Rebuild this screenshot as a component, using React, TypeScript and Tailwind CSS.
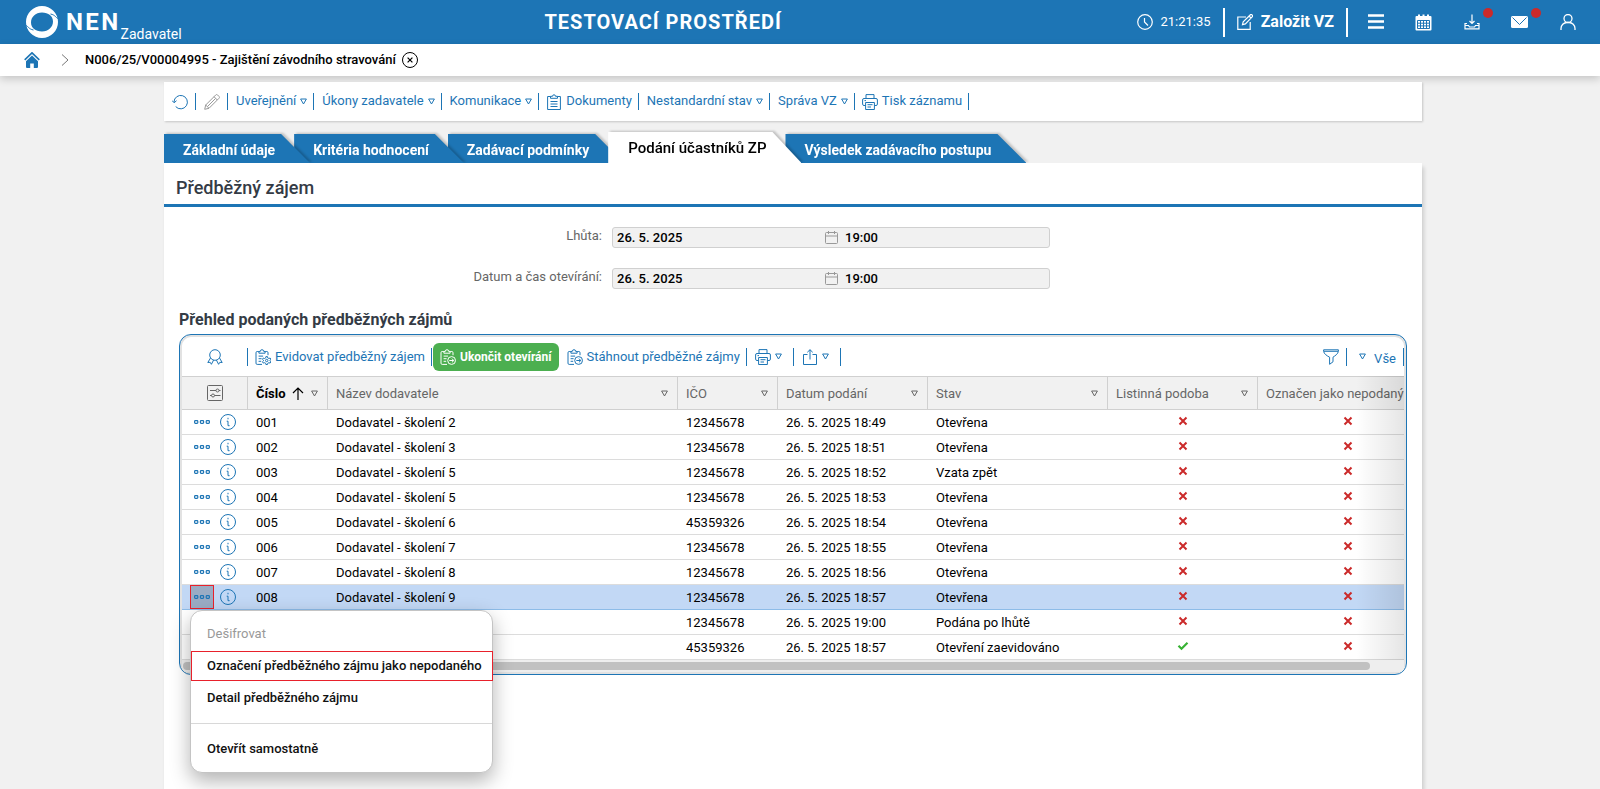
import type { ReactNode } from 'react';
import { clsx } from 'clsx';

const TABS = [
  { label: 'Základní údaje', z: 'z-[4]' },
  { label: 'Kritéria hodnocení', z: 'z-[3]' },
  { label: 'Zadávací podmínky', z: 'z-[2]' },
  { label: 'Podání účastníků ZP', z: 'z-[5]', active: true },
  { label: 'Výsledek zadávacího postupu', z: 'z-[1]' }
];

const FIELDS = [
  { id: 'lhuta', label: 'Lhůta:', date: '26. 5. 2025', time: '19:00' },
  { id: 'otevirani', label: 'Datum a čas otevírání:', date: '26. 5. 2025', time: '19:00' }
];

const COLUMNS = [
  { label: 'Název dodavatele', width: 'w-[350px]' },
  { label: 'IČO', width: 'w-[100px]' },
  { label: 'Datum podání', width: 'w-[150px]' },
  { label: 'Stav', width: 'w-[180px]' },
  { label: 'Listinná podoba', width: 'w-[150px]' },
  { label: 'Označen jako nepodaný', width: 'w-[180px]', noMenu: true }
];

const ROWS = [
  { id: '001', name: 'Dodavatel - školení 2', ico: '12345678', date: '26. 5. 2025 18:49', state: 'Otevřena', paper: false },
  { id: '002', name: 'Dodavatel - školení 3', ico: '12345678', date: '26. 5. 2025 18:51', state: 'Otevřena', paper: false },
  { id: '003', name: 'Dodavatel - školení 5', ico: '12345678', date: '26. 5. 2025 18:52', state: 'Vzata zpět', paper: false },
  { id: '004', name: 'Dodavatel - školení 5', ico: '12345678', date: '26. 5. 2025 18:53', state: 'Otevřena', paper: false },
  { id: '005', name: 'Dodavatel - školení 6', ico: '45359326', date: '26. 5. 2025 18:54', state: 'Otevřena', paper: false },
  { id: '006', name: 'Dodavatel - školení 7', ico: '12345678', date: '26. 5. 2025 18:55', state: 'Otevřena', paper: false },
  { id: '007', name: 'Dodavatel - školení 8', ico: '12345678', date: '26. 5. 2025 18:56', state: 'Otevřena', paper: false },
  { id: '008', name: 'Dodavatel - školení 9', ico: '12345678', date: '26. 5. 2025 18:57', state: 'Otevřena', paper: false },
  { id: '', name: '', ico: '12345678', date: '26. 5. 2025 19:00', state: 'Podána po lhůtě', paper: false },
  { id: '', name: '', ico: '45359326', date: '26. 5. 2025 18:57', state: 'Otevření zaevidováno', paper: true }
];

const SELECTED_ID = '008';

const Icon = ({ children, size = 'size-4' }: { children: ReactNode; size?: string }) => (
  <svg viewBox="0 0 16 16" fill="none" stroke="currentColor" className={clsx('shrink-0', size)} aria-hidden="true">
    {children}
  </svg>
);

const Triangle = () => (
  <svg viewBox="0 0 7 7" fill="none" stroke="currentColor" className="size-[7px] shrink-0" aria-hidden="true">
    <path d="M.6 1h5.800L3.500 6z" />
  </svg>
);

const PrintIcon = () => (
  <Icon>
    <path d="M4 4.500V.6h8v3.900M3.500 11.500H2a1.400 1.400 0 0 1-1.400-1.400V6A1.400 1.400 0 0 1 2 4.500h12A1.400 1.400 0 0 1 15.400 6v4.100a1.400 1.400 0 0 1-1.400 1.400h-1.500M3.600 8.500h8.800v7H3.600zM5.500 10.700h5M5.500 13h3.500M2.500 6.600h1.500" />
  </Icon>
);

const ClipboardBase = () => (
  <path d="M7 15.400H2.200a1.200 1.200 0 0 1-1.200-1.200V3.700a1.200 1.200 0 0 1 1.200-1.200h1.600M10.200 2.500h1.600A1.200 1.200 0 0 1 13 3.700v2.500M3.900 4.200V2.400h1.400a1.700 1.700 0 0 1 3.400 0h1.400v1.800zM3.600 7.100h4.500M3.600 9.700h3M3.600 12.300h2.600" />
);

const ClipboardGear = () => (
  <Icon>
    <ClipboardBase />
    <circle cx="11.700" cy="11.500" r="1.200" />
    <path d="m10.900 7.600-.2 1.300-1.200.6-1.200-.5-.8 1.400 1 .8v.6l-1 .9.800 1.400 1.200-.4 1.200.6.2 1.200h1.600l.2-1.200 1.200-.6 1.200.4.8-1.400-1-.9v-.6l1-.8-.8-1.400-1.200.5-1.200-.6-.2-1.300z" />
  </Icon>
);

const ClipboardArrow = () => (
  <Icon>
    <ClipboardBase />
    <circle cx="11.600" cy="11.500" r="3.900" />
    <path d="M9.300 11.500h4.400M11.900 9.600l1.900 1.900-1.900 1.900" />
  </Icon>
);

const CalendarOutline = () => (
  <svg viewBox="0 0 13 13" fill="none" stroke="#999" className="size-[13px] shrink-0" aria-hidden="true">
    <rect x=".5" y="1.500" width="12" height="11" rx="1" />
    <path d="M.5 5h12M3.500 0v3M9.500 0v3" />
  </svg>
);

const Cross = () => (
  <svg viewBox="0 0 10 10" fill="none" stroke="#cb2a2a" strokeWidth="2" className="mx-auto mb-0.5 size-[10px]" aria-label="Ne">
    <path d="m1.500 1.500 7 7M8.500 1.500l-7 7" />
  </svg>
);

const Check = () => (
  <svg viewBox="0 0 12 10" fill="none" stroke="#37b234" strokeWidth="2.200" className="mx-auto mb-0.5 h-[10px] w-3" aria-label="Ano">
    <path d="m1.500 4.800 3 3 6-6" />
  </svg>
);

const Separator = ({ tall = false }: { tall?: boolean }) => (
  <span className={clsx('w-px shrink-0 bg-[#1d75b5]', tall ? 'h-[18px]' : 'h-[17px]')} />
);

type ToolButtonProps = { icon?: ReactNode; label: string; labelClass?: string; menu?: boolean };

const ToolButton = ({ icon, label, labelClass = 'pb-0.5', menu = false }: ToolButtonProps) => (
  <button
    type="button"
    className={clsx('flex items-center gap-1 whitespace-nowrap', menu ? 'pl-2 pr-1.5' : 'pl-[7px] pr-1.5')}
  >
    {icon}
    <span className={labelClass}>{label}</span>
    {menu && <Triangle />}
  </button>
);

const HeaderButton = ({ title, badge = false, children }: { title: string; badge?: boolean; children: ReactNode }) => (
  <button type="button" title={title} className="relative flex h-11 w-12 items-center justify-center">
    {children}
    {badge && <span className="absolute right-[3px] top-2 size-[10px] rounded-full bg-[#cb2a2a]" />}
  </button>
);

const Header = () => (
  <header className="flex h-11 items-center justify-between bg-[#1d75b5] text-white">
    <a href="#" className="flex h-11 items-center pl-[26px]">
      <svg viewBox="0 0 32 32" className="size-8" aria-hidden="true">
        <path
          d="M16 0a16 16 0 1 1 0 32 16 16 0 0 1 0-32zM16 6.500C9.500 6.500 5 11 5 16.500S9.500 25.500 16 25.500 27 21 27 15.500 22.500 6.500 16 6.500z"
          fill="white"
          fillRule="evenodd"
        />
        <path d="M0 19.500C2 20 2.500 23 7.500 24M32 12.500c-2-.5-2.500-3.500-7.500-4.500" fill="none" stroke="#1d75b5" />
      </svg>
      <span className="ml-2 text-2xl font-bold tracking-widest">NEN</span>
      <span className="self-end text-sm">Zadavatel</span>
    </a>
    <strong className="pl-2 text-xl font-bold tracking-wider">TESTOVACÍ PROSTŘEDÍ</strong>
    <div className="flex items-center justify-end pr-2">
      <Icon>
        <circle cx="8" cy="8" r="7.300" strokeWidth="1.200" />
        <path d="M7.500 4v4l3.500 3.500" strokeWidth="1.200" />
      </Icon>
      <span className="ml-2 text-[13px]">21:21:35</span>
      <span className="ml-3 h-[29px] w-0.5 bg-white" />
      <button type="button" className="flex items-center gap-2 px-3 font-bold">
        <Icon>
          <path d="M9 3H.8v12.400h12.400V8" strokeWidth="1.200" />
          <path d="m5.500 10.700.7-3L13.400.700a1 1 0 0 1 1.400 0l.6.600a1 1 0 0 1 0 1.400l-7 7.200zM12 2l2 2" strokeWidth="1.200" />
        </Icon>
        Založit VZ
      </button>
      <span className="mr-1 h-[29px] w-0.5 bg-white" />
      <HeaderButton title="Nabídka">
        <Icon>
          <path d="M0 1.500h16M0 7.500h16M0 13.500h16" strokeWidth="2.400" />
        </Icon>
      </HeaderButton>
      <HeaderButton title="Kalendář">
        <svg viewBox="0 0 17 17" className="size-[17px]" aria-hidden="true">
          <path d="M1.500 2H3V.5h2V2h2.500V.5h2V2H12V.5h2V2h1.500a1 1 0 0 1 1 1v12.500a1 1 0 0 1-1 1h-14a1 1 0 0 1-1-1V3a1 1 0 0 1 1-1z" fill="white" />
          <path d="M2.500 6.500h12v8h-12zM2.500 9.200h12M2.500 11.900h12M5.500 6.500v8M8.500 6.500v8M11.500 6.500v8" fill="none" stroke="#1d75b5" />
        </svg>
      </HeaderButton>
      <HeaderButton title="Stažené soubory" badge>
        <Icon>
          <path d="M8 .5v9M5.500 7 8 9.500 10.500 7M3 9.500H1v5.300h14V9.500h-2M1 11.500h3.500l1 1.500h5l1-1.500H15" strokeWidth="1.200" />
        </Icon>
      </HeaderButton>
      <HeaderButton title="Zprávy" badge>
        <svg viewBox="0 0 17 12" className="h-3 w-[17px]" aria-hidden="true">
          <rect width="17" height="12" rx="1.500" fill="white" />
          <path d="m1.500 1.500 7 7 7-7" fill="none" stroke="#1d75b5" />
        </svg>
      </HeaderButton>
      <HeaderButton title="Uživatel">
        <Icon>
          <circle cx="8" cy="4.500" r="4" strokeWidth="1.300" />
          <path d="M1 16v-1.500a6 6 0 0 1 6-6h2a6 6 0 0 1 6 6V16" strokeWidth="1.300" />
        </Icon>
      </HeaderButton>
    </div>
  </header>
);

const Breadcrumbs = () => (
  <nav className="flex h-8 items-center bg-white pl-6 text-[13px] font-medium text-black shadow-[0_3px_8px_rgba(0,0,0,0.18)]">
    <a href="#" title="Domů">
      <svg viewBox="0 0 16 16" className="size-4" aria-hidden="true">
        <path d="m.7 7.800 7.300-7 7.300 7" fill="none" stroke="#1d75b5" strokeWidth="1.600" />
        <path d="M2 9.200 8 3.500l6 5.700V15a1 1 0 0 1-1 1H9.800v-4.500H6.200V16H3a1 1 0 0 1-1-1z" fill="#1d75b5" />
      </svg>
    </a>
    <svg viewBox="0 0 8 12" fill="none" stroke="#777" className="ml-[21px] mr-4 h-3 w-2 shrink-0" aria-hidden="true">
      <path d="m1 .5 6 5.500-6 5.500" />
    </svg>
    <a href="#">N006/25/V00004995 - Zajištění závodního stravování</a>
    <button type="button" title="Zavřít" className="ml-1.5">
      <Icon>
        <circle cx="8" cy="8" r="7.500" />
        <path d="m5.600 5.600 4.800 4.800M10.400 5.600l-4.800 4.800" strokeWidth="1.200" />
      </Icon>
    </button>
  </nav>
);

const RecordToolbar = () => (
  <div className="flex h-[39px] items-center bg-white pl-2 text-[13px] text-[#1d75b5] shadow-[1px_1px_2px_rgba(0,0,0,0.18)]">
    <button type="button" title="Obnovit" className="pr-[7px]">
      <Icon>
        <path d="M2 8a6.700 6.700 0 1 1 1.700 4.600M0 6.500 2.100 8.800 4.500 6.700" />
      </Icon>
    </button>
    <Separator />
    <button type="button" title="Upravit" className="pl-2 pr-[7px] text-[#999]">
      <Icon>
        <path d="m.7 15.300 1-4.300L11.800.900a1.200 1.200 0 0 1 1.700 0l1.600 1.600a1.200 1.200 0 0 1 0 1.700L5 14.300zM1.700 11 5 14.300M10 2.700 13.300 6M3.500 12.500 11.500 4.500" />
      </Icon>
    </button>
    <Separator />
    <ToolButton label="Uveřejnění" menu />
    <Separator />
    <ToolButton label="Úkony zadavatele" menu />
    <Separator />
    <ToolButton label="Komunikace" menu />
    <Separator />
    <ToolButton
      label="Dokumenty"
      icon={
        <Icon>
          <path d="M4.500 2.500H1.600v13h12.800v-13h-2.900M4.500 4.300v-2h2a1.500 1.500 0 0 1 3 0h2v2zM4.500 7.500h7M4.500 10h7M4.500 12.500h7" />
        </Icon>
      }
    />
    <Separator />
    <ToolButton label="Nestandardní stav" menu />
    <Separator />
    <ToolButton label="Správa VZ" menu />
    <Separator />
    <ToolButton label="Tisk záznamu" icon={<PrintIcon />} />
    <Separator />
  </div>
);

const Tabs = () => (
  <ul className="flex h-[31px] items-end">
    {TABS.map((tab) => (
      <li key={tab.label} className={clsx('relative -mr-4 drop-shadow-[2px_-1px_1px_rgba(0,0,0,0.2)]', tab.z)}>
        <a
          href="#"
          className={clsx(
            'flex items-center whitespace-nowrap pr-[35px] pt-0.5 [clip-path:polygon(0_0,calc(100%-29px)_0,100%_100%,0_100%)]',
            tab.active
              ? 'h-[31px] bg-white pl-5 text-[15px] font-medium text-black'
              : 'h-[29px] bg-[#1d75b5] pl-[19px] text-sm font-bold text-white'
          )}
        >
          {tab.label}
        </a>
      </li>
    ))}
  </ul>
);

const GridToolbar = () => (
  <div className="flex h-[39px] items-center text-[13px] text-[#1d75b5]">
    <button type="button" title="Certifikát" className="flex w-[65px] justify-center">
      <Icon>
        <circle cx="8" cy="6" r="5.300" />
        <path d="M3.500 9 .8 13.500l2.400-.2 1.200 2 2.200-4.200M12.500 9l2.700 4.500-2.400-.2-1.200 2-2.200-4.200" />
      </Icon>
    </button>
    <Separator tall />
    <ToolButton label="Evidovat předběžný zájem" labelClass="pb-0" icon={<ClipboardGear />} />
    <Separator tall />
    <button type="button" className="mx-px flex h-7 items-center gap-1 whitespace-nowrap rounded-md bg-[#4caf50] px-[7px] text-xs font-bold text-white">
      <ClipboardArrow />
      Ukončit otevírání
    </button>
    <ToolButton label="Stáhnout předběžné zájmy" labelClass="pb-0" icon={<ClipboardArrow />} />
    <Separator tall />
    <button type="button" title="Tisk" className="flex items-center gap-1 pl-2 pr-[11px]">
      <PrintIcon />
      <Triangle />
    </button>
    <Separator tall />
    <button type="button" title="Export" className="flex items-center gap-1 pl-2 pr-[11px]">
      <Icon>
        <path d="M5.500 5.500H1.500v10h13v-10h-4M8 10.500V.8M5.300 3.300 8 .7l2.700 2.600" />
      </Icon>
      <Triangle />
    </button>
    <Separator tall />
    <button type="button" title="Filtr" className="ml-auto pr-[7px]">
      <Icon>
        <path d="M.6.800h14.800v1.500C15 5 12 6.800 10 8.200v4.600l-3.400 2.500V8.200C4 6.800 1 5 .6 2.300zM1 2.300h14" />
      </Icon>
    </button>
    <Separator tall />
    <button type="button" className="flex items-center gap-2 pl-3 pr-[7px]">
      <Triangle />
      <span className="pt-1">Vše</span>
    </button>
    <Separator tall />
  </div>
);

const HEAD_CELL = 'border-y border-r border-[#d0d0d0] px-2 text-left font-normal';

const OffersTable = () => (
  <table className="w-[1256px] table-fixed border-separate border-spacing-0 text-[13px] text-black">
    <thead>
      <tr className="h-[34px] bg-[#f1f1f1] text-[#666]">
        <th className={clsx(HEAD_CELL, 'w-[66px]')}>
          <button type="button" title="Nastavení sloupců" className="flex w-full justify-center">
            <Icon>
              <rect x=".5" y=".5" width="15" height="15" rx="1" />
              <path d="M3 5.500h6M12 5.500h1.500M3 10.500h1.500M7.500 10.500h6" />
              <circle cx="10.500" cy="5.500" r="1.500" />
              <circle cx="6" cy="10.500" r="1.500" />
            </Icon>
          </button>
        </th>
        <th className={clsx(HEAD_CELL, 'w-20')}>
          <div className="flex items-center">
            <span className="pt-px font-bold text-black">Číslo</span>
            <svg viewBox="0 0 12 13" fill="none" stroke="black" strokeWidth="1.200" className="ml-1.5 h-[13px] w-3" aria-hidden="true">
              <path d="M6 13V1M1 6l5-5 5 5" />
            </svg>
            <button type="button" title="Filtr sloupce" className="ml-auto pr-px">
              <Triangle />
            </button>
          </div>
        </th>
        {COLUMNS.map((col) => (
          <th key={col.label} className={clsx(HEAD_CELL, col.width)}>
            <div className="flex items-center justify-between whitespace-nowrap">
              <span className="pt-px">{col.label}</span>
              {!col.noMenu && (
                <button type="button" title="Filtr sloupce" className="pr-px">
                  <Triangle />
                </button>
              )}
            </div>
          </th>
        ))}
      </tr>
    </thead>
    <tbody>
      {ROWS.map((row, i) => {
        const selected = row.id === SELECTED_ID;
        return (
          <tr
            key={i}
            className={clsx(
              'h-[25px] *:border-b *:px-2',
              selected ? 'bg-[#c2d8f5] *:border-[#8dbce8]' : 'bg-white *:border-[#dcdcdc]'
            )}
          >
            <td>
              <div className="flex items-center gap-1.5 text-[#1d75b5]">
                <button
                  type="button"
                  title="Akce"
                  className={clsx(
                    'flex h-6 w-6 items-center justify-center border',
                    selected ? 'border-[#e8212b] bg-[#9aacc4]' : 'border-transparent'
                  )}
                >
                  <svg viewBox="0 0 16 4" fill="none" stroke="currentColor" strokeWidth="1.200" className="h-1 w-4 shrink-0" aria-hidden="true">
                    <rect x=".6" y=".6" width="3.200" height="2.800" rx=".8" />
                    <rect x="6.400" y=".6" width="3.200" height="2.800" rx=".8" />
                    <rect x="12.200" y=".6" width="3.200" height="2.800" rx=".8" />
                  </svg>
                </button>
                <button type="button" title="Detail">
                  <Icon>
                    <circle cx="8" cy="8" r="7.500" />
                    <path d="M8 3.800v1.500M6.700 7.200H8v4.500h1.600" />
                  </Icon>
                </button>
              </div>
            </td>
            <td className="pt-0.5">{row.id}</td>
            <td className="pt-0.5">{row.name}</td>
            <td className="pt-0.5">{row.ico}</td>
            <td className="pt-0.5">{row.date}</td>
            <td className="pt-0.5">{row.state}</td>
            <td>{row.paper ? <Check /> : <Cross />}</td>
            <td>
              <Cross />
            </td>
          </tr>
        );
      })}
    </tbody>
  </table>
);

const ContextMenu = () => (
  <div
    role="menu"
    className="absolute left-[11px] top-[276px] z-10 flex w-[303px] flex-col whitespace-nowrap rounded-xl border border-[#c4c4c4] bg-white py-[7px] text-[13px] font-medium text-[#111] shadow-[0_8px_20px_rgba(0,0,0,0.3)] *:pl-4 *:text-left"
  >
    <button type="button" role="menuitem" disabled className="h-8 font-normal text-[#999]">
      Dešifrovat
    </button>
    <button type="button" role="menuitem" className="-mr-px my-px h-[30px] border border-[#e8212b] indent-[-1px]">
      Označení předběžného zájmu jako nepodaného
    </button>
    <button type="button" role="menuitem" className="h-8">
      Detail předběžného zájmu
    </button>
    <hr className="my-[9px] h-px border-0 bg-[#d8d8d8]" />
    <button type="button" role="menuitem" className="h-8">
      Otevřít samostatně
    </button>
  </div>
);

export default function App() {
  return (
    <div className="flex min-h-screen flex-col bg-[#f1f1f1] font-['Roboto',sans-serif]">
      <Header />
      <Breadcrumbs />
      <div className="flex flex-1 pr-[14px] pt-1.5">
        <main className="mx-auto flex w-full max-w-[1258px] flex-col">
          <RecordToolbar />
          <div className="pt-[11px]">
            <Tabs />
          </div>
          <section className="relative z-10 flex-1 bg-white shadow-[2px_4px_4px_rgba(0,0,0,0.15)]">
            <h1 className="flex h-11 items-center border-b-[3px] border-[#1d75b5] pl-3 pt-2 text-lg font-medium text-[#343b45]">
              Předběžný zájem
            </h1>
            <div className="flex flex-col gap-5 pt-5">
              {FIELDS.map((field) => (
                <div key={field.id} className="flex h-[21px] items-center text-[13px]">
                  <label htmlFor={field.id} className="w-[448px] shrink-0 pb-1 pr-[10px] text-right text-[#666]">
                    {field.label}
                  </label>
                  <div className="flex h-full w-[438px] items-center rounded-[3px] border border-[#d0d0d0] bg-[#f1f1f1] font-medium text-black">
                    <input id={field.id} readOnly value={field.date} className="w-[212px] bg-transparent pl-1 outline-none" />
                    <CalendarOutline />
                    <input
                      readOnly
                      aria-label={`${field.label} čas`}
                      value={field.time}
                      className="min-w-0 flex-1 bg-transparent pl-[7px] outline-none"
                    />
                  </div>
                </div>
              ))}
            </div>
            <div className="px-[15px] pb-16 pt-[19px]">
              <h2 className="pb-0.5 text-base font-bold text-[#343b45]">Přehled podaných předběžných zájmů</h2>
              <div className="relative">
                <div className="overflow-hidden rounded-xl border border-[#1d75b5] bg-white p-0.5 shadow-[inset_0_0_0_2px_#e2e2e2]">
                  <GridToolbar />
                  <div className="relative overflow-hidden">
                    <OffersTable />
                    <div className="pointer-events-none absolute inset-y-0 right-0 w-12 bg-linear-to-r from-transparent to-black/10" />
                  </div>
                  <div className="h-3 bg-[#eee] pl-px pr-[34px] pt-0.5">
                    <div className="h-2 rounded-full bg-[#c1c1c1]" />
                  </div>
                </div>
                <ContextMenu />
              </div>
            </div>
          </section>
        </main>
      </div>
    </div>
  );
}
